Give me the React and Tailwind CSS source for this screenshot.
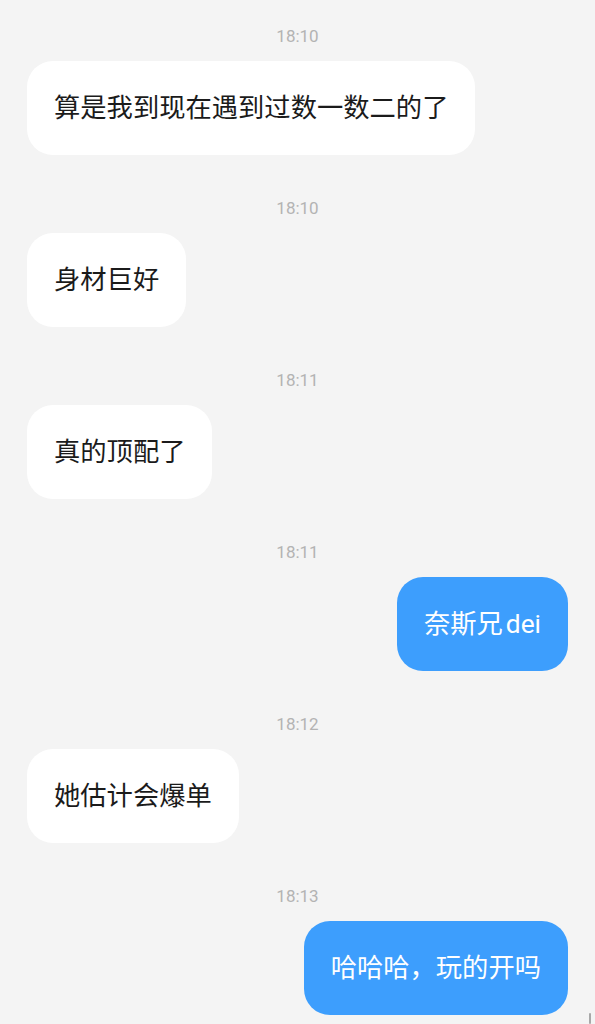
import React from 'react';

const messages = [
  { time: '18:10', text: '算是我到现在遇到过数一数二的了', mine: false },
  { time: '18:10', text: '身材巨好', mine: false },
  { time: '18:11', text: '真的顶配了', mine: false },
  { time: '18:11', text: <>奈斯兄<span className="ml-[3px]">dei</span></>, mine: true },
  { time: '18:12', text: '她估计会爆单', mine: false },
  { time: '18:13', text: '哈哈哈，玩的开吗', mine: true },
];

function Bubble({ text, mine }) {
  return (
    <div className={mine ? 'flex justify-end' : 'flex justify-start'}>
      <div
        className={
          mine
            ? 'rounded-[26px] bg-[#3d9efd] px-[27px] py-[29px] text-[26.3px] leading-[36px] text-white'
            : 'rounded-[26px] bg-white px-[27px] py-[29px] text-[26.3px] leading-[36px] text-[#1b1b1b]'
        }
      >
        {text}
      </div>
    </div>
  );
}

export default function App() {
  return (
    <div
      className="relative h-[1024px] w-full overflow-hidden bg-[#f4f4f4] px-[27px] pt-[24px]"
      style={{ fontFamily: 'Roboto, "Noto Sans CJK SC", sans-serif' }}
    >
      <div className="flex flex-col gap-[41px]">
        {messages.map((m, i) => (
          <div key={i} className="flex flex-col gap-[13px]">
            <div className="h-[24px] text-center text-[17px] leading-[24px] text-[#b3b3b3]">{m.time}</div>
            <Bubble text={m.text} mine={m.mine} />
          </div>
        ))}
      </div>
      <div className="absolute right-[4px] bottom-0 h-[11px] w-[2px] rounded-full bg-[#a8a8a8]" />
    </div>
  );
}
